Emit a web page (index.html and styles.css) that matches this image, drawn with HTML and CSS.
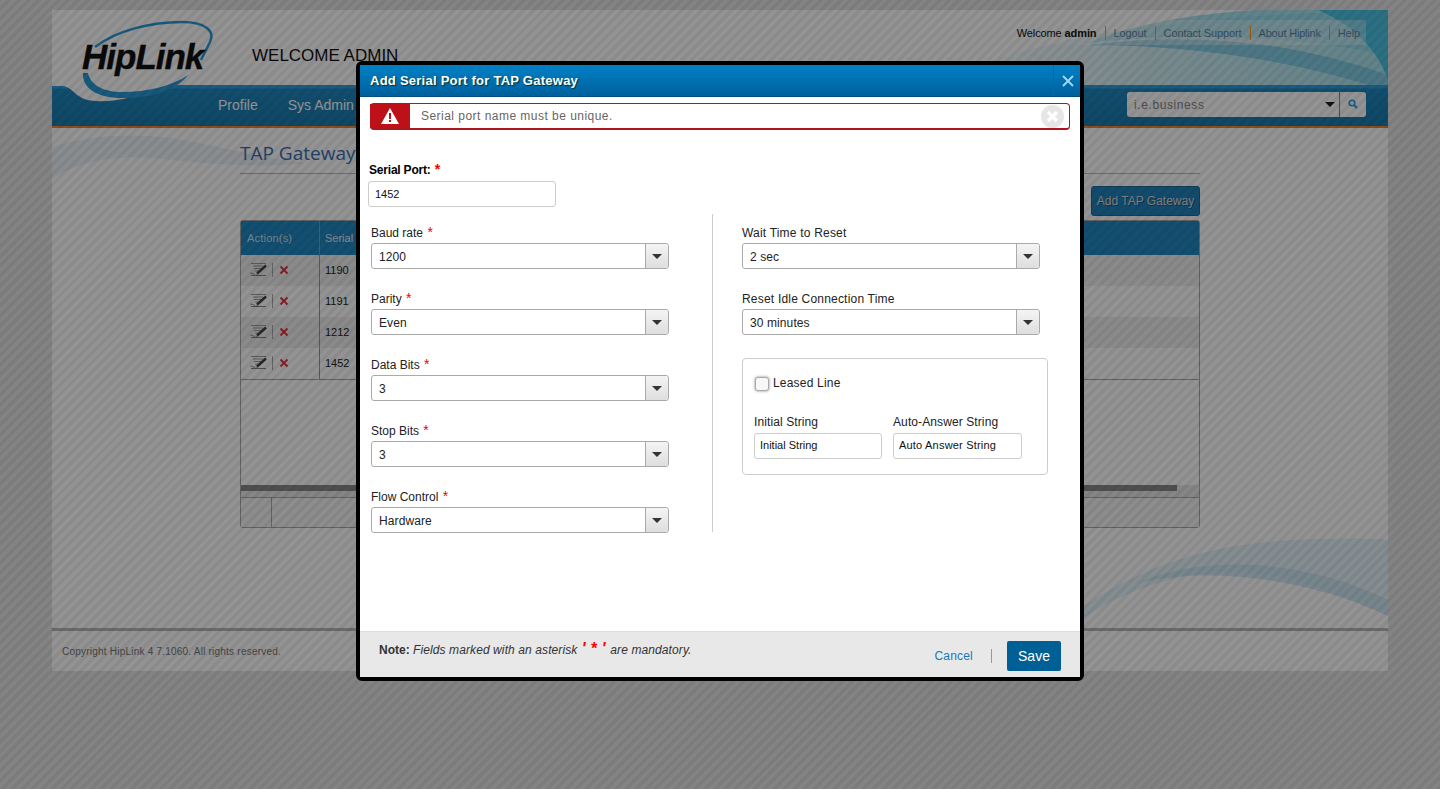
FILE: index.html
```html
<!DOCTYPE html>
<html lang="en">
<head>
<meta charset="UTF-8">
<title>Add Serial Port for TAP Gateway</title>
<link rel="stylesheet" href="styles.css">
</head>
<body>
<svg class="defs" width="0" height="0">
  <symbol id="edit" viewBox="0 0 18 14">
    <path d="M1 1.500h15M3 4h10M4 6.500h7M5 9h3" stroke="#9a9a9a" fill="none"/>
    <path d="M7 11.500 16 3.500" stroke="#444" stroke-width="2.400" fill="none"/>
    <path d="M5.500 13 7 11.500l1.200 1z" fill="#c89a50"/>
    <path d="M0 10.500c1 2 2 0 3 1s1 1 2 .5M1 13.500h15" stroke="#666" stroke-width=".8" fill="none"/>
  </symbol>
  <symbol id="del" viewBox="0 0 10 10">
    <path d="M1.500 1.500l7 7M8.500 1.500l-7 7" stroke="#e8303f" stroke-width="1.800" fill="none"/>
  </symbol>
  <linearGradient id="topfade" x1="0" x2="1" y1="0" y2="0">
    <stop offset="0" stop-color="#e4f6fa" stop-opacity="0"/>
    <stop offset=".45" stop-color="#d4f0f6"/>
    <stop offset="1" stop-color="#a8e4f0"/>
  </linearGradient>
</svg>

<div class="page">
  <div class="top">
    <svg class="top-waves" width="700" height="75" viewBox="0 0 700 75">
      <path d="M250 75C350 20 520 5 700 0v75z" fill="url(#topfade)"/>
      <path d="M400 33C480 0 600 -6 700 0V45C600 25 500 22 400 33z" fill="#8cdcec" opacity=".75"/>
      <path d="M400 35C500 22 600 30 700 65V75H680C600 50 500 35 400 35z" fill="#78c8e4" opacity=".8"/>
      <path d="M630 0H700V70C690 40 665 15 630 0z" fill="#4cc4e4"/>
    </svg>
    <a class="logo" href="#">
      <svg class="logo-ring" width="150" height="90" viewBox="0 0 150 90">
        <path d="M13 27C35 10 70 2 100 2 125 2 133 12 128 22 125 28 122 34 119 40" stroke="#2a9bd8" stroke-width="2.500" fill="none"/>
        <path d="M1 53C0 68 15 78 40 78 70 78 95 70 106 55 90 66 65 72 40 72 20 72 8 64 6 53z" fill="#2a9bd8"/>
      </svg>
      <span class="logo-text">HipLink</span>
    </a>
    <h1 class="welcome">WELCOME ADMIN</h1>
    <ul class="toplinks">
      <li class="hello">Welcome <b>admin</b></li>
      <li><a href="#">Logout</a></li>
      <li><a href="#">Contact Support</a></li>
      <li class="about"><a href="#">About Hiplink</a></li>
      <li class="help"><a href="#">Help</a></li>
    </ul>
  </div>

  <div class="nav">
    <svg class="nav-curve" width="140" height="22" viewBox="0 0 140 22">
      <path d="M0 0H125C105 2 100 8 80 12 60 17 40 18 30 13 22 9 18 1 10 1L0 1z" fill="#fff"/>
    </svg>
    <a href="#">Profile</a>
    <a href="#">Sys Admin</a>
    <div class="search">
      <div class="search-box">i.e.business<span class="caret"></span></div>
      <button class="search-btn">
        <svg width="10" height="10" viewBox="0 0 10 10"><circle cx="4" cy="4" r="2.800" stroke="#2a9ce0" stroke-width="1.600" fill="none"/><path d="M6 6l3 3" stroke="#2a9ce0" stroke-width="2"/></svg>
      </button>
    </div>
  </div>

  <div class="content">
    <svg class="content-wave" width="300" height="60" viewBox="0 0 300 60">
      <path d="M0 14C30 4 70 0 110 4S200 24 255 30C205 36 150 30 110 26S30 26 0 46z" fill="#eef4f8"/>
    </svg>
    <svg class="bottom-wave" width="310" height="90" viewBox="0 0 310 90">
      <path d="M0 72C40 45 100 10 200 3 250 0 290 0 310 2V78C240 45 190 34 155 34 95 34 40 55 0 84z" fill="#dcf0fa" fill-opacity=".75"/>
      <path d="M60 45C120 18 220 18 310 62V78C230 40 130 28 60 45z" fill="#c4e2f2" fill-opacity=".7"/>
    </svg>
    <div class="main">
      <h2 class="title">TAP Gateway</h2>
      <div class="toolbar"><button class="add-btn">Add TAP Gateway</button></div>
      <div class="grid">
        <div class="grid-head">
          <span class="col-action">Action(s)</span>
          <span class="col-serial">Serial</span>
        </div>
        <div class="grid-row">
          <span class="col-action"><svg class="ic-edit"><use href="#edit"/></svg><i class="sep"></i><svg class="ic-del"><use href="#del"/></svg></span>
          <span class="col-serial">1190</span>
        </div>
        <div class="grid-row alt">
          <span class="col-action"><svg class="ic-edit"><use href="#edit"/></svg><i class="sep"></i><svg class="ic-del"><use href="#del"/></svg></span>
          <span class="col-serial">1191</span>
        </div>
        <div class="grid-row">
          <span class="col-action"><svg class="ic-edit"><use href="#edit"/></svg><i class="sep"></i><svg class="ic-del"><use href="#del"/></svg></span>
          <span class="col-serial">1212</span>
        </div>
        <div class="grid-row alt">
          <span class="col-action"><svg class="ic-edit"><use href="#edit"/></svg><i class="sep"></i><svg class="ic-del"><use href="#del"/></svg></span>
          <span class="col-serial">1452</span>
        </div>
        <div class="grid-space"></div>
        <div class="grid-scroll"><div class="grid-thumb"></div></div>
        <div class="grid-foot"><span></span></div>
      </div>
    </div>
  </div>

  <div class="footer">Copyright HipLink 4 7.1060. All rights reserved.</div>
</div>

<div class="overlay"></div>

<div class="modal">
  <div class="modal-head">
    <span class="modal-title">Add Serial Port for TAP Gateway</span>
    <a class="modal-close" href="#">
      <svg width="12" height="12" viewBox="0 0 12 12"><path d="M1 1l10 10M11 1L1 11" stroke="#a6d8f5" stroke-width="1.800"/></svg>
    </a>
  </div>

  <div class="alert">
    <span class="alert-icon">
      <svg width="18" height="16" viewBox="0 0 18 16"><path d="M9 0l9 16H0z" fill="#fff"/><path d="M8 5h2v6H8zM8 12h2v2H8z" fill="#bd1018"/></svg>
    </span>
    <span class="alert-text">Serial port name must be unique.</span>
    <span class="alert-close">
      <svg width="13" height="13" viewBox="0 0 13 13"><path d="M2 2l9 9M11 2l-9 9" stroke="#fff" stroke-width="3.400"/></svg>
    </span>
  </div>

  <div class="modal-body">
    <div class="serial">
      <label class="serial-label">Serial Port: <em>*</em></label>
      <input class="text serial-input" type="text" value="1452">
    </div>

    <div class="cols">
      <div class="col-left">
        <div class="field"><label>Baud rate <em>*</em></label><div class="select">1200<span class="arrow"></span></div></div>
        <div class="field"><label>Parity <em>*</em></label><div class="select">Even<span class="arrow"></span></div></div>
        <div class="field"><label>Data Bits <em>*</em></label><div class="select">3<span class="arrow"></span></div></div>
        <div class="field"><label>Stop Bits <em>*</em></label><div class="select">3<span class="arrow"></span></div></div>
        <div class="field"><label>Flow Control <em>*</em></label><div class="select">Hardware<span class="arrow"></span></div></div>
      </div>
      <div class="col-right">
        <div class="field"><label>Wait Time to Reset</label><div class="select">2 sec<span class="arrow"></span></div></div>
        <div class="field"><label>Reset Idle Connection Time</label><div class="select">30 minutes<span class="arrow"></span></div></div>
        <div class="leased">
          <div class="leased-check"><span class="checkbox"></span>Leased Line</div>
          <div class="leased-row">
            <div class="leased-init"><label>Initial String</label><input class="text" type="text" value="Initial String"></div>
            <div class="leased-auto"><label>Auto-Answer String</label><input class="text" type="text" value="Auto Answer String"></div>
          </div>
        </div>
      </div>
    </div>
  </div>

  <div class="modal-foot">
    <p class="note"><b>Note:</b> <i>Fields marked with an asterisk</i> <span class="note-star">' * '</span> <i>are mandatory.</i></p>
    <div class="foot-actions">
      <a class="cancel" href="#">Cancel</a>
      <i class="foot-sep"></i>
      <button class="save">Save</button>
    </div>
  </div>
</div>
</body>
</html>
```

FILE: styles.css
```css
html,body{margin:0;padding:0;height:100%;}
body{background:#e4e4e4;color:#222;font:12px/1.4 "Liberation Sans",Arial,sans-serif;overflow:hidden;}
ul,h1,h2,p{margin:0;padding:0;}
ul{list-style:none;}
a{text-decoration:none;color:inherit;}
.defs{position:absolute;}

/* page behind the dialog */
.page{margin:10px 52px 0;background:#fff;height:661px;display:flex;flex-direction:column;}
.top{position:relative;z-index:1;height:75px;flex:none;}
.top-waves{position:absolute;right:0;top:0;}
.logo{position:absolute;left:30px;top:10px;width:150px;height:90px;}
.logo-ring{position:absolute;left:0;top:0;}
.logo-text{position:absolute;left:0;top:12px;font:italic bold 35px/50px "Liberation Sans",Arial,sans-serif;letter-spacing:-1px;color:#111;-webkit-text-stroke:.4px #111;}
.welcome{position:absolute;left:200px;top:36px;font-size:17px;font-weight:normal;line-height:20px;color:#111;}
.toplinks{position:absolute;right:22px;top:10px;height:25px;display:flex;align-items:center;font-size:11px;letter-spacing:-.1px;background:rgba(255,255,255,.35);padding-left:14px;}
.toplinks li{padding:0 8px;border-left:1px solid #ff9a20;line-height:14px;color:#5d87a8;}
.toplinks li.hello{border-left:0;color:#111;padding-left:0;}
.toplinks li.about{letter-spacing:-.2px;}
.toplinks li.help{padding-right:6px;}

.nav{position:relative;height:41px;flex:none;background:linear-gradient(#2e9edc 0,#2e9edc 3px,#2088c0 4px,#1c7cb0 100%);border-bottom:2px solid #f7842a;display:flex;align-items:center;padding-left:166px;gap:30px;font-size:14px;color:#fff;}
.nav-curve{position:absolute;left:0;top:0;}
.nav a{position:relative;}
.search{position:absolute;right:22px;top:7px;display:flex;height:25px;}
.search-box{position:relative;width:205px;padding-left:7px;background:#fff;border-radius:3px 0 0 3px;font-size:12px;line-height:26px;letter-spacing:.6px;color:#888;border-right:1px solid #888;}
.caret{position:absolute;right:4px;top:10px;border:5px solid transparent;border-top-color:#222;border-bottom:0;}
.search-btn{width:26px;padding:0;border:0;background:#fff;border-radius:0 3px 3px 0;}

.content{position:relative;flex:1;overflow:hidden;}
.content-wave{position:absolute;left:0;top:5px;}
.bottom-wave{position:absolute;right:0;bottom:0;}
.main{position:relative;width:960px;margin-left:188px;}
.title{font:19px/26px "Open Sans",sans-serif;color:#3a70b6;padding-top:12px;height:33px;border-bottom:1px solid #bbb;}
.toolbar{display:flex;justify-content:flex-end;margin-top:12px;height:34px;}
.add-btn{width:109px;height:30px;padding:0;background:#2283bd;border:1px solid #1a6a9c;border-radius:3px;color:#ddd;font:12px "Liberation Sans",Arial,sans-serif;text-shadow:1px 1px 0 rgba(0,0,0,.35);}

.grid{box-sizing:border-box;height:308px;border:1px solid #aaa;border-radius:3px;display:flex;flex-direction:column;font-size:11px;}
.grid-head{display:flex;height:34px;flex:none;background:#2289c4;color:#fff;align-items:center;}
.grid-head .col-action{line-height:34px;color:#cfe0ea;letter-spacing:.2px;}
.grid-head .col-serial{line-height:34px;color:#e4eef4;}
.col-action{width:79px;padding-left:6px;box-sizing:border-box;border-right:1px solid #999;display:flex;align-items:center;height:100%;}
.col-serial{padding-left:5px;}
.grid-row{display:flex;height:31px;flex:none;align-items:center;background:#f0f0f0;}
.grid-row.alt{background:#fff;}
.grid-row .col-action{padding-left:9px;}
.ic-edit{width:18px;height:14px;margin-bottom:3px;}
.sep{width:1px;height:14px;background:#aaa;margin:0 6px 2px 4px;}
.ic-del{width:10px;height:10px;margin-bottom:2px;}
.grid-space{height:105px;flex:none;border-top:1px solid #aaa;}
.grid-scroll{height:12px;flex:none;background:#e8e8e8;}
.grid-thumb{width:936px;height:6px;background:#8a8a8a;}
.grid-foot{flex:1;border-top:1px solid #aaa;background:#f5f5f5;}
.grid-foot span{display:block;width:30px;height:100%;border-right:1px solid #aaa;}

.footer{height:40px;flex:none;border-top:3px solid #b9b9b9;padding-left:10px;line-height:42px;font-size:10px;color:#777;letter-spacing:.22px;background:#fff;}

.overlay{position:fixed;z-index:5;left:0;top:0;right:0;bottom:0;background:repeating-linear-gradient(-45deg,rgba(0,0,0,.455) 0 3.500px,rgba(0,0,0,.425) 3.500px 7px);}

/* dialog */
.modal{position:absolute;z-index:6;left:356px;top:61px;width:720px;height:612px;border:4px solid #000;border-radius:6px;background:#fff;display:flex;flex-direction:column;}
.modal-head{height:32px;flex:none;display:flex;justify-content:space-between;background:linear-gradient(#0081c6,#00609c);border-bottom:1px solid #004f80;box-sizing:border-box;}
.modal-title{padding-left:10px;font-size:13px;font-weight:bold;line-height:32px;letter-spacing:.25px;color:#fff;text-shadow:1px 1px 1px #033;}
.modal-close{width:27px;padding-left:2px;box-sizing:border-box;border-left:1px solid #006aa8;display:flex;align-items:center;justify-content:center;}
.alert{position:relative;margin:6px 10px 0;height:27px;box-sizing:border-box;border:1px solid #b0141c;border-bottom-width:2px;border-radius:4px;display:flex;align-items:center;flex:none;}
.alert-icon{width:40px;height:100%;background:#bd1018;display:flex;align-items:center;justify-content:center;margin-left:-1px;}
.alert-text{padding:1px 0 0 11px;font-size:12px;letter-spacing:.47px;color:#666;}
.alert-close{position:absolute;right:5px;top:1px;width:23px;height:23px;border-radius:50%;background:#e6e6e6;display:flex;align-items:center;justify-content:center;}

.modal-body{flex:1;padding:33px 0 0 8px;}
.serial-label{display:block;height:14px;font-weight:bold;line-height:14px;color:#000;margin-left:1px;letter-spacing:-.2px;}
em{font-style:normal;color:#e00;font-size:14px;line-height:0;margin-left:1px;}
.text{box-sizing:border-box;height:26px;border:1px solid #ccc;border-radius:3px;padding:0 5px;font:11px "Liberation Sans",Arial,sans-serif;color:#111;background:#fff;outline:0;}
.serial-input{display:block;width:188px;margin-top:4px;padding-left:6px;}
.cols{display:flex;margin:7px 0 0 3px;}
.col-left{width:342px;height:318px;border-right:1px solid #ccc;box-sizing:border-box;}
.col-right{padding-left:29px;}
.field{height:66px;padding-top:12px;box-sizing:border-box;}
.field label{display:block;height:15px;line-height:15px;color:#222;margin-bottom:2px;}
.col-right .field label{letter-spacing:.2px;}
.select{position:relative;box-sizing:border-box;width:298px;height:26px;border:1px solid #aaa;border-radius:3px;padding-left:7px;line-height:26px;color:#222;letter-spacing:.1px;}
.arrow{position:absolute;right:0;top:0;width:22px;height:24px;border-left:1px solid #aaa;background:linear-gradient(#f4f4f4,#dedede);border-radius:0 3px 3px 0;}
.arrow:after{content:"";position:absolute;left:6px;top:10px;border:5px solid transparent;border-top-color:#333;border-bottom:0;}
.leased{box-sizing:border-box;width:306px;height:117px;margin-top:12px;border:1px solid #ccc;border-radius:4px;padding:16px 11px 0;}
.leased-check{display:flex;align-items:center;line-height:17px;color:#222;letter-spacing:.2px;}
.checkbox{box-sizing:border-box;width:14px;height:14px;margin:0 4px 0 1px;border:1px solid #aaa;border-radius:3px;background:#f8f8f8;box-shadow:0 0 3px #888;}
.leased-row{display:flex;gap:11px;margin-top:23px;}
.leased-row label{display:block;line-height:15px;color:#222;margin-bottom:3px;letter-spacing:.1px;}
.leased-row .text{padding-bottom:2px;}
.leased-init .text{width:128px;}
.leased-auto .text{width:129px;letter-spacing:.2px;}

.modal-foot{height:46px;flex:none;box-sizing:border-box;background:#e8e8e8;border-top:1px solid #ddd;display:flex;justify-content:space-between;padding:0 19px;}
.note{padding-top:10px;line-height:16px;color:#333;}
.note i{letter-spacing:.1px;}
.note-star{color:#f00;font-weight:bold;font-size:16px;font-style:italic;line-height:10px;letter-spacing:.3px;margin:0 1px;}
.foot-actions{display:flex;align-items:center;padding-top:3px;}
.cancel{color:#1679b8;letter-spacing:.2px;}
.foot-sep{width:1px;height:14px;background:#999;margin:0 15px 0 18px;}
.save{width:54px;height:30px;padding:0;border:0;border-radius:2px;background:#005f94;color:#fff;font:14px "Liberation Sans",Arial,sans-serif;}
```
